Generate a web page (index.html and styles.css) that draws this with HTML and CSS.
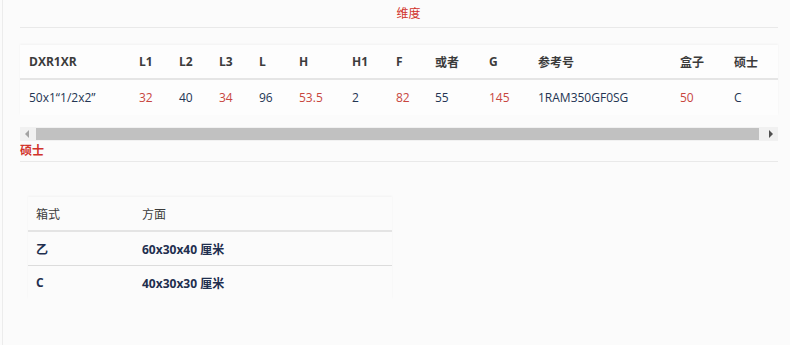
FILE: index.html
```html
<!DOCTYPE html>
<html lang="zh">
<head>
<meta charset="utf-8">
<link rel="stylesheet" href="styles.css">
</head>
<body>
<div class="page">
  <div class="tab-title"><span>维度</span></div>
  <div class="scroll-wrap">
    <table class="dims">
      <colgroup>
        <col class="c-name"><col class="c-40"><col class="c-40"><col class="c-40"><col class="c-40">
        <col class="c-53"><col class="c-44"><col class="c-39"><col class="c-54"><col class="c-49">
        <col class="c-142"><col class="c-54"><col class="c-53">
      </colgroup>
      <thead>
        <tr>
          <th>DXR1XR</th><th>L1</th><th>L2</th><th>L3</th><th>L</th><th>H</th><th>H1</th><th>F</th><th>或者</th><th>G</th><th>参考号</th><th>盒子</th><th>硕士</th>
        </tr>
      </thead>
      <tbody>
        <tr>
          <td>50x1“1/2x2”</td><td class="red">32</td><td>40</td><td class="red">34</td><td>96</td><td class="red">53.5</td><td>2</td><td class="red">82</td><td>55</td><td class="red">145</td><td>1RAM350GF0SG</td><td class="red">50</td><td>C</td>
        </tr>
      </tbody>
    </table>
    <div class="hscroll">
      <div class="arrow left"></div>
      <div class="thumb"></div>
      <div class="arrow right"></div>
    </div>
  </div>
  <div class="section-title">硕士</div>
  <table class="boxes">
    <thead>
      <tr><th class="b-col1">箱式</th><th>方面</th></tr>
    </thead>
    <tbody>
      <tr><td>乙</td><td>60x30x40 厘米</td></tr>
      <tr><td>C</td><td>40x30x30 厘米</td></tr>
    </tbody>
  </table>
</div>
</body>
</html>
```

FILE: styles.css
```css
html, body {
  margin: 0;
  padding: 0;
  background: #fbfbfb;
}
body {
  font-family: "Open Sans", "Noto Sans CJK SC", sans-serif;
  font-size: 12px;
  color: #243553;
}
.page {
  margin-left: 2px;
  border-left: 1px solid #ececec;
  padding: 0 12px 0 17px;
  min-height: 345px;
  box-sizing: border-box;
}
.tab-title {
  height: 27px;
  border-bottom: 1px solid #e9e9e9;
  display: flex;
  justify-content: center;
  align-items: center;
}
.tab-title span {
  color: #d1332b;
  font-size: 12px;
  line-height: 16px;
  margin-left: 19px;
}
.scroll-wrap {
  margin-top: 17px;
  width: 758px;
}
.dims {
  border-collapse: collapse;
  table-layout: fixed;
  width: 758px;
  background: #fdfdfd;
  box-shadow: 0 -1px 2px rgba(0,0,0,0.04);
}
.dims th, .dims td {
  text-align: left;
  padding: 0 0 0 9px;
  white-space: nowrap;
}
.dims th {
  height: 33px;
  font-weight: 700;
  color: #3b3b3b;
  border-bottom: 2px solid #e5e5e5;
}
.dims td {
  height: 35px;
  color: #243553;
}
.dims td.red { color: #c8463e; }
.c-name { width: 110px; }
.c-40 { width: 40px; }
.c-39 { width: 39px; }
.c-44 { width: 44px; }
.c-49 { width: 49px; }
.c-53 { width: 53px; }
.c-54 { width: 54px; }
.c-142 { width: 142px; }

.hscroll {
  margin-top: 12px;
  height: 14px;
  display: flex;
  align-items: stretch;
  background: #f1f1f1;
}
.arrow {
  width: 16px;
  position: relative;
}
.arrow::after {
  content: "";
  position: absolute;
  top: 3px;
  border-top: 4px solid transparent;
  border-bottom: 4px solid transparent;
}
.arrow.left::after {
  left: 5px;
  border-right: 4px solid #a3a3a3;
}
.arrow.right::after {
  left: 7px;
  border-left: 4px solid #505050;
}
.thumb {
  flex: 1;
  background: #c1c1c1;
  margin: 1px 3px 1px 0;
}
.section-title {
  margin-top: 2px;
  color: #d1332b;
  font-weight: 600;
  line-height: 16px;
  padding-bottom: 2px;
  border-bottom: 1px solid #e9e9e9;
}
.boxes {
  margin: 35px 0 0 8px;
  width: 364px;
  border-collapse: collapse;
  box-shadow: 0 -1px 2px rgba(0,0,0,0.04);
}
.boxes th, .boxes td {
  text-align: left;
  padding: 0 0 0 8px;
}
.boxes th {
  height: 33px;
  color: #3b3b3b;
  font-weight: 400;
  border-bottom: 2px solid #e4e4e4;
}
.b-col1 { width: 98px; }
.boxes td {
  height: 33px;
  font-weight: 700;
  color: #1f2f4f;
}
.boxes tbody tr:first-child td {
  border-bottom: 1px solid #dcdcdc;
}
```
